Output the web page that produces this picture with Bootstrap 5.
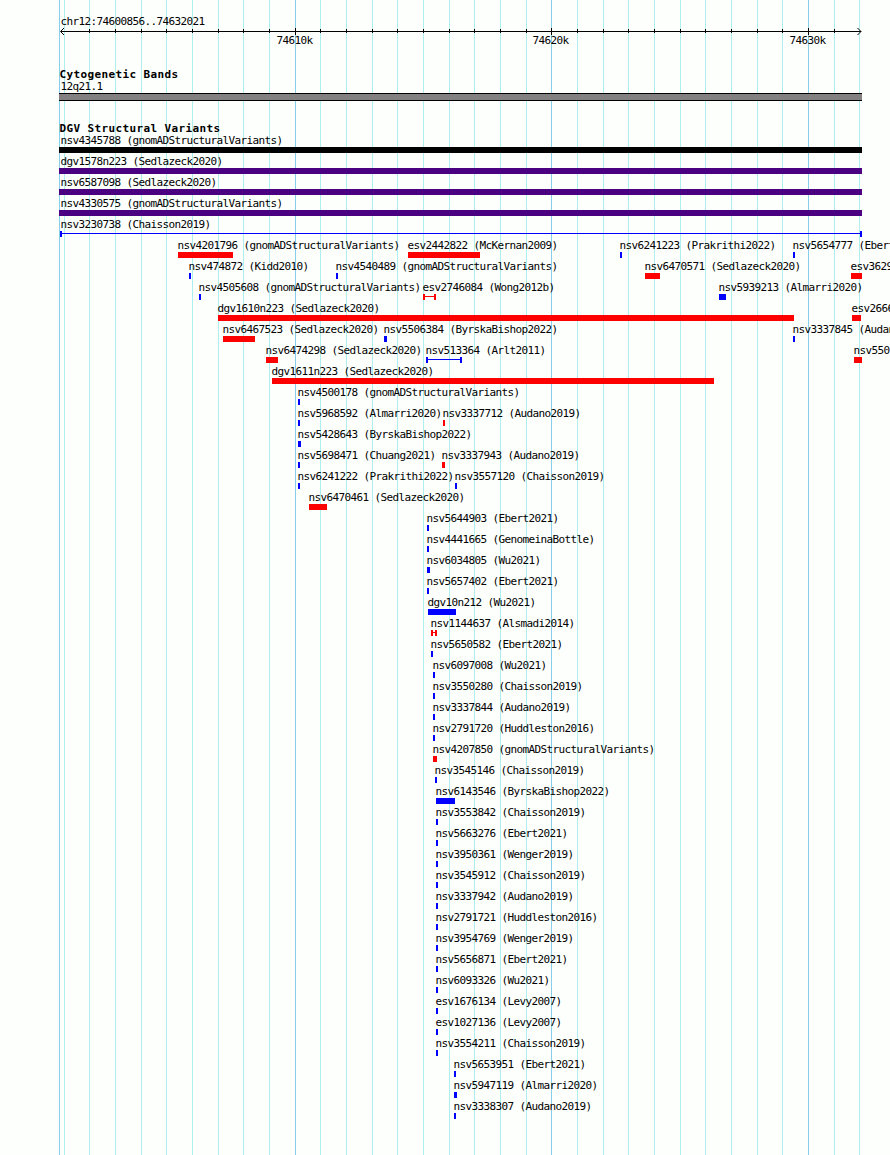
<!DOCTYPE html>
<html lang="en">
<head>
<meta charset="utf-8">
<title>chr12:74600856..74632021</title>
<link href="https://cdn.jsdelivr.net/npm/bootstrap@5.3.0/dist/css/bootstrap.min.css" rel="stylesheet">
<style>
body{background:#fdfffc;color:#000;font:11px/13px "DejaVu Sans Mono",monospace;letter-spacing:-.622px}
.browser{height:1155px}
.gridlines{z-index:0}
.content{z-index:1}
.region{padding:15px 0 0 60.5px;height:27px}
.axis{height:36px}
.track-title{font-size:11px;line-height:13px;font-weight:700;letter-spacing:.378px;padding-left:59.5px;margin:0}
.cytobands{padding-top:5px}
.band-label{padding-left:60.5px;height:12px;line-height:11px}
.band{margin-left:59px;width:803px;height:8px;background:#838082;border:solid #000;border-width:1px 0}
.dgv{padding-top:21px}
.dgv .track-title{height:12px}
.feature-row{display:grid;grid-template-columns:100%;height:21px}
.feature{grid-area:1/1}
.feature-label{height:13px;margin-left:-.5px}
.wide .feature-label{margin-left:1.5px}
.inset .feature-label{margin-left:.5px}
.bar{height:6px;background:currentColor}
.span-line{height:6px;border:solid currentColor;border-width:0 2px;background:linear-gradient(currentColor,currentColor) 0 2px/100% 1px no-repeat}
.c-red{color:#f00}.c-blue{color:#00f}.c-purple{color:#4b0082}.c-black{color:#000}
</style>
<script src="https://cdn.jsdelivr.net/npm/bootstrap@5.3.0/dist/js/bootstrap.bundle.min.js"></script>
</head>
<body>
<main class="browser position-relative overflow-hidden">
  <svg class="gridlines position-absolute top-0 start-0" width="890" height="1155" shape-rendering="crispEdges" aria-hidden="true"></svg>
  <div class="content position-relative text-nowrap">
    <div class="region">chr12:74600856..74632021</div>
    <svg class="axis d-block" width="890" height="36" viewBox="0 27 890 36">
      <path d="M61 31.5H861" stroke="#000" shape-rendering="crispEdges"/>
      <path d="M64 28L60.5 31.5L64 35M857.5 28L861 31.5L857.5 35" fill="none" stroke="#000"/>
      <g id="ticks" shape-rendering="crispEdges"></g>
      <g><text x="276.5" y="44">74610k</text><text x="532.5" y="44">74620k</text><text x="789.5" y="44">74630k</text></g>
    </svg>
    <section class="cytobands">
      <h2 class="track-title">Cytogenetic Bands</h2>
      <div class="band-label">12q21.1</div>
      <div class="band"></div>
    </section>
    <section class="dgv">
      <h2 class="track-title">DGV Structural Variants</h2>
      <div id="variants"></div>
    </section>
  </div>
</main>
<script>
const grid=document.querySelector('.gridlines'),ticks=document.getElementById('ticks');
const minor=[64,89,115,141,166,192,218,243,269,295,320,346,372,397,423,449,474,500,526,551,577,603,628,654,680,705,731,757,782,808,834,859];
const major=[295,551,808];
let lines='<rect x="59" width="1" height="1155" fill="#87ceeb"/>',marks='';
for(const x of minor){
  const m=major.includes(x);
  lines+=`<rect x="${x}" width="1" height="1155" fill="${m?'#87ceeb':'#afeeee'}"/>`;
  if(x>64&&x<859)marks+=`<rect x="${x}" y="${m?28:29}" width="1" height="${m?7:4}"/>`;
}
grid.innerHTML=lines;ticks.innerHTML=marks;

// Each row: features as [label, start, width, colour, span-only]
const g='gnomADStructuralVariants',b='blue',r='red';
const rows=[
[['nsv4345788 ('+g+')',59,803,'black']],
[['dgv1578n223 (Sedlazeck2020)',59,803,'purple']],
[['nsv6587098 (Sedlazeck2020)',59,803,'purple']],
[['nsv4330575 ('+g+')',59,803,'purple']],
[['nsv3230738 (Chaisson2019)',60,802,b,1]],
[['nsv4201796 ('+g+')',178,55,r],['esv2442822 (McKernan2009)',408,72,r],['nsv6241223 (Prakrithi2022)',620,2,b],['nsv5654777 (Ebert2021)',793,2,b]],
[['nsv474872 (Kidd2010)',189,2,b],['nsv4540489 ('+g+')',336,2,b],['nsv6470571 (Sedlazeck2020)',645,15,r],['esv3629',851,11,r]],
[['nsv4505608 ('+g+')',199,2,b],['esv2746084 (Wong2012b)',423,13,r,1],['nsv5939213 (Almarri2020)',719,7,b]],
[['dgv1610n223 (Sedlazeck2020)',218,576,r],['esv2666',852,9,r]],
[['nsv6467523 (Sedlazeck2020)',223,32,r],['nsv5506384 (ByrskaBishop2022)',384,3,b],['nsv3337845 (Audano2019)',793,2,b]],
[['nsv6474298 (Sedlazeck2020)',266,12,r],['nsv513364 (Arlt2011)',426,36,b,1],['nsv550',854,8,r]],
[['dgv1611n223 (Sedlazeck2020)',272,442,r]],
[['nsv4500178 ('+g+')',298,2,b]],
[['nsv5968592 (Almarri2020)',298,2,b],['nsv3337712 (Audano2019)',443,2,r]],
[['nsv5428643 (ByrskaBishop2022)',298,3,b]],
[['nsv5698471 (Chuang2021)',298,2,b],['nsv3337943 (Audano2019)',442,3,r]],
[['nsv6241222 (Prakrithi2022)',298,2,b],['nsv3557120 (Chaisson2019)',455,2,b]],
[['nsv6470461 (Sedlazeck2020)',309,18,r]],
[['nsv5644903 (Ebert2021)',427,2,b]],
[['nsv4441665 (GenomeinaBottle)',427,2,b]],
[['nsv6034805 (Wu2021)',427,3,b]],
[['nsv5657402 (Ebert2021)',427,2,b]],
[['dgv10n212 (Wu2021)',428,28,b]],
[['nsv1144637 (Alsmadi2014)',431,6,r,1]],
[['nsv5650582 (Ebert2021)',431,2,b]],
[['nsv6097008 (Wu2021)',433,2,b]],
[['nsv3550280 (Chaisson2019)',433,2,b]],
[['nsv3337844 (Audano2019)',433,2,b]],
[['nsv2791720 (Huddleston2016)',433,2,b]],
[['nsv4207850 ('+g+')',433,4,r]],
[['nsv3545146 (Chaisson2019)',435,2,b]],
[['nsv6143546 (ByrskaBishop2022)',436,19,b]],
[['nsv3553842 (Chaisson2019)',436,2,b]],
[['nsv5663276 (Ebert2021)',436,2,b]],
[['nsv3950361 (Wenger2019)',436,2,b]],
[['nsv3545912 (Chaisson2019)',436,2,b]],
[['nsv3337942 (Audano2019)',436,2,b]],
[['nsv2791721 (Huddleston2016)',436,2,b]],
[['nsv3954769 (Wenger2019)',436,2,b]],
[['nsv5656871 (Ebert2021)',436,2,b]],
[['nsv6093326 (Wu2021)',436,2,b]],
[['esv1676134 (Levy2007)',436,2,b]],
[['esv1027136 (Levy2007)',436,2,b]],
[['nsv3554211 (Chaisson2019)',436,2,b]],
[['nsv5653951 (Ebert2021)',454,2,b]],
[['nsv5947119 (Almarri2020)',454,3,b]],
[['nsv3338307 (Audano2019)',454,2,b]]
];
document.getElementById('variants').innerHTML=rows.map((row,i)=>
 `<div class="feature-row${i<4?' wide':i===4?' inset':''}">`+row.map(([t,x,w,c,s])=>
  `<div class="feature" style="margin-left:${x}px"><div class="feature-label">${t}</div><div class="${s?'span-line':'bar'} c-${c}" style="width:${w}px"></div></div>`).join('')+'</div>').join('');
</script>
</body>
</html>
